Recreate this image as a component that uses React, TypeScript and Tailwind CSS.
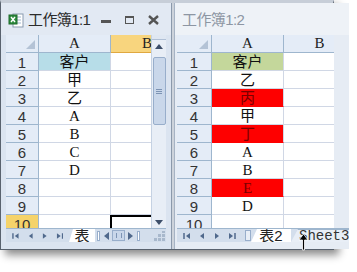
import React from "react"

const serif = "font-['Liberation_Serif','Noto_Sans_CJK_SC',serif]"
const mono = "font-['Liberation_Mono','Noto_Sans_CJK_SC',monospace]"
const sans = "font-['Liberation_Sans','Noto_Sans_CJK_SC',sans-serif]"

type Row = { v: string; bg?: string; red?: boolean }

const leftRows: Row[] = [
  { v: "客户", bg: "bg-[#b7dde8]" },
  { v: "甲" },
  { v: "乙" },
  { v: "A" },
  { v: "B" },
  { v: "C" },
  { v: "D" },
  { v: "" },
  { v: "" },
  { v: "" },
]

const rightRows: Row[] = [
  { v: "客户", bg: "bg-[#c4d79b]" },
  { v: "乙" },
  { v: "丙", red: true },
  { v: "甲" },
  { v: "丁", red: true },
  { v: "A" },
  { v: "B" },
  { v: "E", red: true },
  { v: "D" },
  { v: "" },
]

function ExcelIcon() {
  return (
    <svg width="16" height="16" viewBox="0 0 16 16">
      <rect x="5" y="2" width="10" height="13" fill="#fff" stroke="#8a9bb0" />
      <path d="M7 5h6M7 8h6M7 11h6" stroke="#9fb6cf" />
      <rect x="1" y="3" width="8" height="9" fill="#2e8b3e" stroke="#1d6b2a" />
      <path d="M3 5l4 5M7 5l-4 5" stroke="#fff" strokeWidth="1.4" />
    </svg>
  )
}

function NavButtons() {
  return (
    <div className="flex items-center gap-[7px] px-[6px] h-full text-[#50698c]">
      <svg width="8" height="8" viewBox="0 0 8 8"><path d="M1 1v6" stroke="currentColor" strokeWidth="1.5" /><path d="M7 1L3 4l4 3z" fill="currentColor" /></svg>
      <svg width="8" height="8" viewBox="0 0 8 8"><path d="M6 1L2 4l4 3z" fill="currentColor" /></svg>
      <svg width="8" height="8" viewBox="0 0 8 8"><path d="M2 1l4 3-4 3z" fill="currentColor" /></svg>
      <svg width="8" height="8" viewBox="0 0 8 8"><path d="M7 1v6" stroke="currentColor" strokeWidth="1.5" /><path d="M1 1l4 3-4 3z" fill="currentColor" /></svg>
    </div>
  )
}

function Grid({ rows, hdrW, bWidth, selB }: { rows: Row[]; hdrW: string; bWidth: string; selB?: boolean }) {
  return (
    <div className={`flex flex-col overflow-hidden ${bWidth}`}>
      {/* header row */}
      <div className="flex h-[18px] shrink-0">
        <div className={`${hdrW} shrink-0 border-r border-b border-[#9eb6ce] bg-[#e4ecf7] relative`}>
          <div className="absolute right-[3px] bottom-[3px] w-0 h-0 border-l-[9px] border-l-transparent border-b-[9px] border-b-[#b4c3d6]" />
        </div>
        <div className={`w-[72px] shrink-0 border-r border-b border-[#9eb6ce] bg-[#e4ecf7] flex items-center justify-center ${serif} text-[15px] text-[#222]`}>A</div>
        <div className={`w-[72px] shrink-0 border-b border-[#9eb6ce] flex items-center justify-center ${serif} text-[15px] text-[#222] ${selB ? "bg-[#f8d57e] border-b-[#e0a840]" : "bg-[#e4ecf7] border-r"}`}>B</div>
      </div>
      {rows.map((r, i) => {
        const isTen = i === 9
        return (
          <div key={i} className={`flex shrink-0 ${isTen ? "h-[14px] overflow-hidden" : "h-[18px]"}`}>
            <div
              className={`${hdrW} shrink-0 border-r border-b border-[#9eb6ce] flex justify-center ${sans} text-[15px] leading-[19px] text-[#333] ${isTen && selB ? "bg-[#f5d36a]" : "bg-[#e4ecf7]"}`}
            >
              {i + 1}
            </div>
            <div
              className={`w-[72px] shrink-0 border-r border-b border-[#d0d7e5] flex justify-center ${serif} text-[15px] leading-[18px] ${r.red ? "bg-[#fe0000] text-[#7a0000] border-b-[#fe0000]" : r.bg ? `${r.bg} text-[#111]` : "bg-white text-[#111]"}`}
            >
              {r.v}
            </div>
            <div className="w-[72px] shrink-0 border-b border-[#d0d7e5] bg-white relative">
              {isTen && selB && (
                <div className="absolute left-[-1px] top-0 w-[80px] h-[20px] border-l-2 border-t-2 border-black" />
              )}
            </div>
          </div>
        )
      })}
    </div>
  )
}

function VScroll() {
  return (
    <div className="w-[15px] shrink-0 bg-[#e8eef6] border-l border-[#c5d2e3] flex flex-col items-center">
      <div className="h-[5px] w-full border-b border-[#b0c0d6] bg-[#dfe7f2]" />
      <div className="h-[12px] w-full flex items-center justify-center">
        <svg width="8" height="5" viewBox="0 0 8 5"><path d="M0 5L4 0l4 5z" fill="#3d4f6a" /></svg>
      </div>
      <div className="mt-[5px] h-[68px] w-[13px] rounded-[2px] border border-[#98aecb] bg-[#c9d7ea] flex items-center justify-center">
        <div className="w-[6px] h-[5px] border-y border-[#7d94b4] relative">
          <div className="absolute left-0 right-0 top-[1px] border-t border-[#7d94b4]" />
        </div>
      </div>
      <div className="flex-1" />
      <div className="h-[12px] w-full flex items-center justify-center">
        <svg width="8" height="5" viewBox="0 0 8 5"><path d="M0 0h8L4 5z" fill="#3d4f6a" /></svg>
      </div>
    </div>
  )
}

function LeftWindow() {
  return (
    <div className="w-[171px] shrink-0 flex flex-col bg-[#dbe4f0] border-r border-[#8b99ab]">
      {/* title bar */}
      <div className="h-[32px] shrink-0 flex items-center pl-[7px] pr-[12px] pt-[2px] bg-[#e2e9f3]">
        <ExcelIcon />
        <span className={`ml-[4px] ${sans} text-[15px] text-[#2b2b2b] tracking-[-0.6px]`}>工作簿1:1</span>
        <div className="ml-auto flex items-center gap-[14px] text-[#555]">
          <div className="w-[10px] h-[3px] bg-[#555] mt-[3px]" />
          <div className="w-[9px] h-[8px] border border-[#555] border-t-2" />
          <svg width="11" height="10" viewBox="0 0 11 10"><path d="M1 1l9 8M10 1L1 9" stroke="#555" strokeWidth="2.4" /></svg>
        </div>
      </div>
      <div className="flex flex-1 min-h-0 pl-[5px] pr-[5px]">
        <Grid rows={leftRows} hdrW="w-[33px]" bWidth="w-[146px]" selB />
        <VScroll />
      </div>
      {/* tab bar */}
      <div className="h-[14px] shrink-0 flex mx-[5px] bg-[#d3deec] border-t border-[#9eb6ce]">
        <div className="w-[63px] shrink-0"><NavButtons /></div>
        <div className={`w-[26px] shrink-0 bg-white flex justify-center items-center ${sans} text-[15px] leading-[14px] text-[#222] [clip-path:polygon(4px_0,100%_0,100%_100%,0_100%)]`}>表</div>
        <div className="flex-1 flex items-center gap-[3px] pl-[2px] text-[#50698c]">
          <div className="w-[3px] h-[10px] border border-[#98aecb] bg-white" />
          <svg width="6" height="8" viewBox="0 0 6 8"><path d="M6 0L1 4l5 4z" fill="currentColor" /></svg>
          <div className="w-[13px] h-[11px] border border-[#98aecb] bg-[#c9d7ea] flex items-center justify-center">
            <div className="w-[6px] h-[5px] border-x border-[#7d94b4]" />
          </div>
          <svg width="6" height="8" viewBox="0 0 6 8"><path d="M0 0l5 4-5 4z" fill="currentColor" /></svg>
          <div className="w-[3px] h-[10px] border border-[#98aecb] bg-white" />
          <div className="ml-auto w-[13px] h-[12px] grid grid-cols-3 gap-[1px] p-[1px]">
            {Array(9).fill(0).map((_, i) => (
              <div key={i} className={`${[2, 4, 5, 6, 7, 8].includes(i) ? "bg-[#a8b8cc]" : ""}`} />
            ))}
          </div>
        </div>
      </div>
      <div className="h-[7px] shrink-0" />
    </div>
  )
}

function RightWindow() {
  return (
    <div className="flex-1 flex flex-col bg-[#e6ecf4] border-l border-[#a6b3c4] ml-[2px]">
      <div className="h-[32px] shrink-0 flex items-center pl-[7px] pt-[2px] bg-[#eef2f7]">
        <span className={`${sans} text-[15px] text-[#8d96a3] tracking-[-0.6px]`}>工作簿1:2</span>
      </div>
      <div className="flex flex-1 min-h-0 pl-[2px]">
        <Grid rows={rightRows} hdrW="w-[35px]" bWidth="w-[157px]" />
      </div>
      <div className="h-[14px] shrink-0 flex ml-[2px] bg-[#d3deec] border-t border-[#9eb6ce]">
        <div className="w-[68px] shrink-0"><NavButtons /></div>
        <div className="w-[6px] shrink-0 border border-[#98aecb] bg-[#e8eef6] my-[1px]" />
        <div className={`w-[40px] shrink-0 bg-white flex justify-center items-center ${sans} text-[15px] leading-[14px] text-[#222] [clip-path:polygon(6px_0,100%_0,100%_100%,0_100%)]`}>表2</div>
        <div className={`flex-1 overflow-hidden bg-[#e8eef6] border-t border-[#9eb6ce] pl-[8px] flex items-center ${mono} text-[14px] leading-[14px] text-[#333] whitespace-nowrap [clip-path:polygon(7px_0,100%_0,100%_100%,0_100%)]`}>Sheet3</div>
      </div>
      <div className="h-[7px] shrink-0" />
    </div>
  )
}

export default function App() {
  return (
    <div className="w-[357px] h-[272px] bg-white relative overflow-hidden">
      <div className="w-[334px] h-[250px] flex border border-[#59626e] border-t-[3px] border-t-[#c7ced8] bg-[#cdd3db] shadow-[5px_5px_8px_rgba(0,0,0,0.45)]">
        <LeftWindow />
        <RightWindow />
      </div>
      {/* mouse cursor */}
      <svg className="absolute left-[298px] top-[233px]" width="11" height="18" viewBox="0 0 11 18">
        <path d="M5.5 1L1 7h3.5v10h2V7H10z" fill="#000" stroke="#fff" strokeWidth="0.8" />
      </svg>
    </div>
  )
}
